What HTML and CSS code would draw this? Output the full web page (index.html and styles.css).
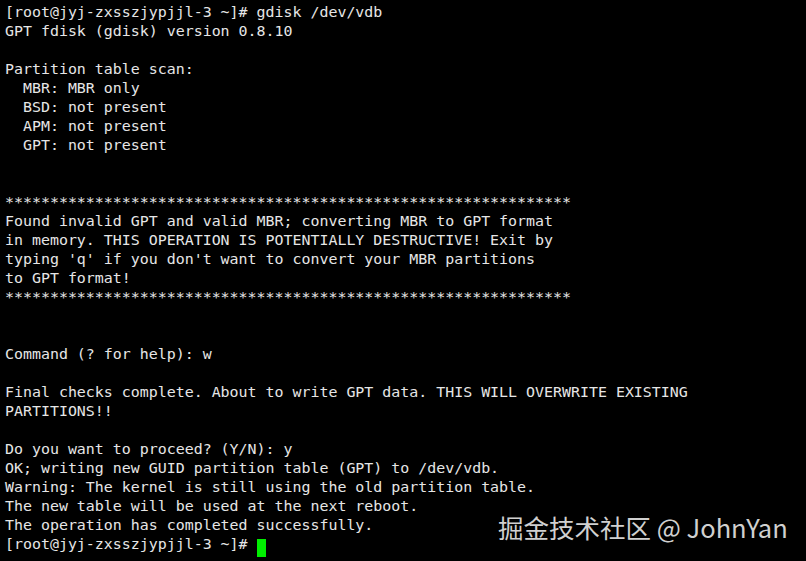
FILE: index.html
```html
<!DOCTYPE html>
<html>
<head>
<meta charset="utf-8">
<link rel="stylesheet" href="styles.css">
</head>
<body>
<pre class="term">[root@jyj-zxsszjypjjl-3 ~]# gdisk /dev/vdb
GPT fdisk (gdisk) version 0.8.10

Partition table scan:
  MBR: MBR only
  BSD: not present
  APM: not present
  GPT: not present


***************************************************************
Found invalid GPT and valid MBR; converting MBR to GPT format
in memory. THIS OPERATION IS POTENTIALLY DESTRUCTIVE! Exit by
typing 'q' if you don't want to convert your MBR partitions
to GPT format!
***************************************************************


Command (? for help): w

Final checks complete. About to write GPT data. THIS WILL OVERWRITE EXISTING
PARTITIONS!!

Do you want to proceed? (Y/N): y
OK; writing new GUID partition table (GPT) to /dev/vdb.
Warning: The kernel is still using the old partition table.
The new table will be used at the next reboot.
The operation has completed successfully.
[root@jyj-zxsszjypjjl-3 ~]# <span class="cursor"> </span></pre>
<div class="watermark">掘金技术社区 @ JohnYan</div>
</body>
</html>
```
FILE: styles.css
```css
html, body {
  margin: 0;
  padding: 0;
  background: #000;
  width: 806px;
  height: 561px;
  overflow: hidden;
}
body {
  position: relative;
}
.term {
  margin: 0;
  padding: 3px 0 0 5px;
  font-family: "DejaVu Sans Mono", monospace;
  font-size: 14.93px;
  line-height: 19px;
  color: #e6e6e6;
  white-space: pre;
}
.cursor {
  display: inline-block;
  width: 9px;
  height: 18px;
  background: #00ee00;
  vertical-align: -4px;
}
.watermark {
  position: absolute;
  left: 498px;
  top: 510px;
  font-family: "Noto Sans CJK SC", "Noto Sans", sans-serif;
  font-size: 25.5px;
  line-height: 34px;
  color: #d0d0d0;
}
```
